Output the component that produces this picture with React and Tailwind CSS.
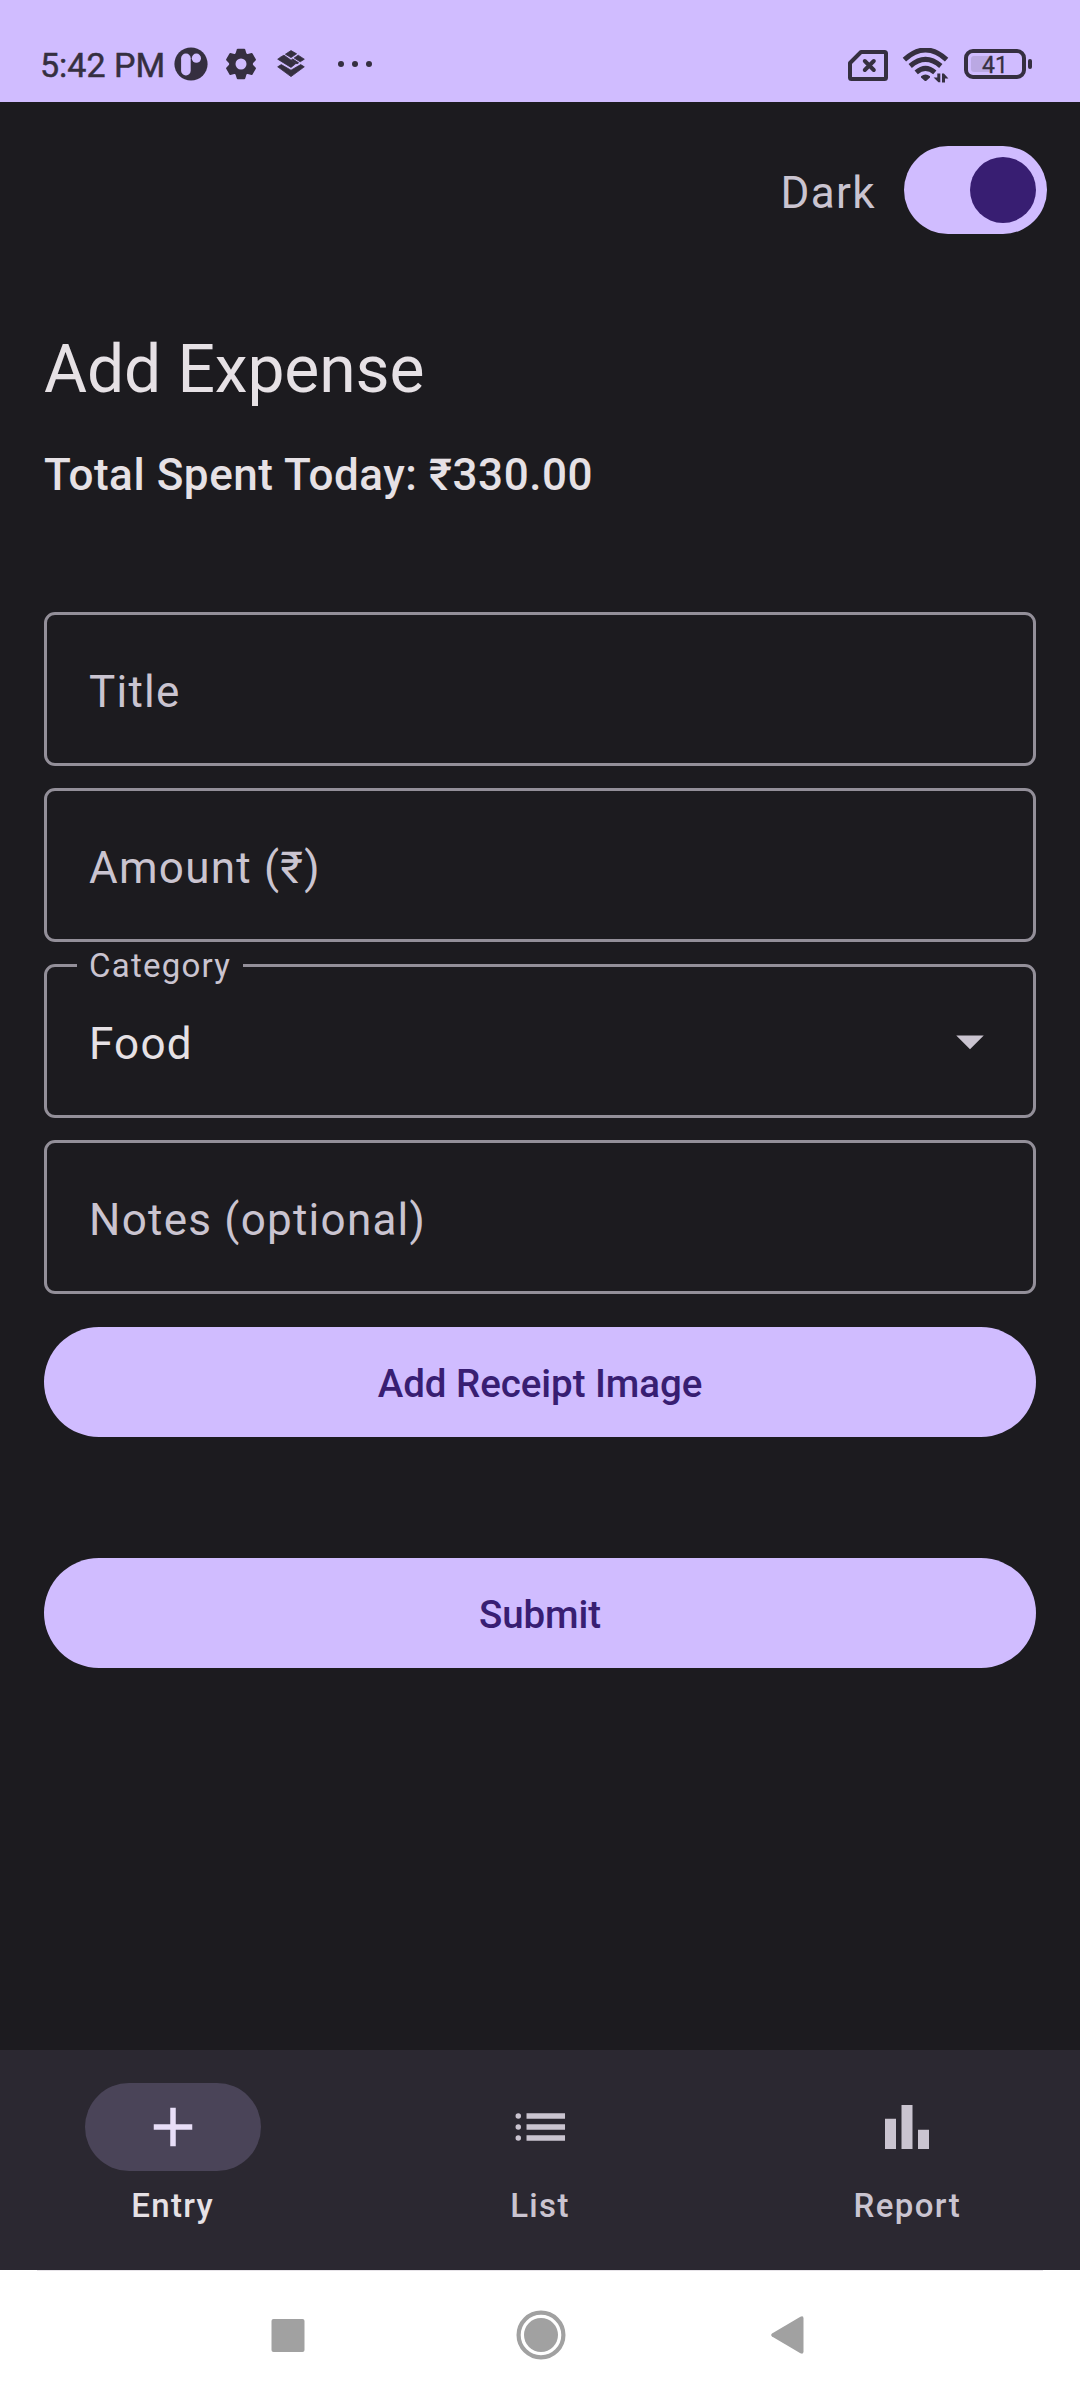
import React from "react";

const INK = "#352f40";

function PBadgeIcon() {
  return (
    <svg width="34" height="34" viewBox="0 0 34 34">
      <circle cx="17" cy="17" r="16.6" fill={INK} />
      <rect x="7.1" y="6.5" width="9.6" height="22" rx="4.7" fill="#d0bcff" />
      <circle cx="22.4" cy="11.2" r="4.6" fill="#d0bcff" />
    </svg>
  );
}

function GearIcon() {
  return (
    <svg width="32" height="32" viewBox="-16 -16 32 32" fill={INK}>
      <circle r="11.8" />
      {[0, 60, 120, 180, 240, 300].map((a) => (
        <path key={a} transform={`rotate(${a})`} d="M-5.9 -9 L-4.2 -14.6 Q-4 -15.2 -3.3 -15.2 H3.3 Q4 -15.2 4.2 -14.6 L5.9 -9 Z" />
      ))}
      <circle r="5.5" fill="#d0bcff" />
    </svg>
  );
}

function LayersIcon() {
  return (
    <svg width="28" height="28" viewBox="0 0 28 28" fill={INK} stroke={INK} strokeWidth="0.8" strokeLinejoin="round">
      <path d="M14 0.6 L19.6 3.8 L14 7.6 L8.4 4.2 Z" />
      <path d="M21.2 5.2 L27.3 9.2 L23.2 11.8 L17.2 8 Z" />
      <path d="M15.8 9 L21.6 12.8 L20 13.9 L14.3 10 Z" />
      <path d="M4.4 6.6 L7 5.2 L18.8 13.6 L14 17.4 L0.7 9.2 Z" />
      <path d="M0.7 16.8 L4.3 14.6 L14 20.2 L23.7 14.6 L27.3 16.8 L14 26.6 Z" />
    </svg>
  );
}

function SimIcon() {
  return (
    <svg width="40" height="31" viewBox="0 0 40 31" fill="none" stroke={INK} strokeWidth="4" strokeLinejoin="round">
      <path d="M13 2 H36.5 Q38 2 38 3.5 V27.5 Q38 29 36.5 29 H3.5 Q2 29 2 27.5 V13 Z" />
      <path d="M16.8 11 L25.8 20 M25.8 11 L16.8 20" strokeLinecap="round" strokeWidth="4" />
    </svg>
  );
}

function WifiIcon() {
  return (
    <svg width="48" height="36" viewBox="0 0 48 36" fill="none" stroke={INK}>
      <path d="M2.4 11.6 Q23.5 -7.6 44.6 11.6" strokeWidth="5" />
      <path d="M8.2 18 Q23.5 4.6 38.8 18" strokeWidth="5" />
      <path d="M14.2 24.4 Q23.5 16.4 32.8 24.4" strokeWidth="5" />
      <path d="M19 28.2 Q23.5 24.8 28 28.2 V29.4 L24.6 32.6 Q23.5 33.6 22.4 32.6 L19 29.4 Z" fill={INK} stroke="none" />
      <path d="M38.3 25.4 V34.2 H36.4 L31.6 29.4 H35.3 V25.4 Z" fill={INK} stroke="none" />
      <path d="M40 34.4 V25.6 H41.9 L46.4 30.4 H43 V34.4 Z" fill={INK} stroke="none" />
    </svg>
  );
}

function Battery() {
  return (
    <div className="flex items-center gap-[2px]">
      <div className="flex h-[30px] w-[62px] rounded-[9px] border-4 border-[#352f40] p-[3px]">
        <div className="h-[16px] w-[22px] rounded-[3px] bg-[#baa8e3]" />
        <span className="-ml-[11px] -mt-[2px] text-[23px] leading-[24px] text-[#352f40] [-webkit-text-stroke:0.3px_#352f40]">41</span>
      </div>
      <div className="h-[10px] w-1 rounded-[2px] bg-[#352f40]" />
    </div>
  );
}

function StatusBar() {
  return (
    <header className="flex h-[102px] items-center bg-[#d0bcff] pl-10 pr-12 pt-[26px]">
      <span className="w-[134px] whitespace-nowrap pt-px text-[34px] leading-[40px] text-[#352f40] [-webkit-text-stroke:0.5px_#352f40]">5:42 PM</span>
      <PBadgeIcon />
      <div className="ml-[17px]"><GearIcon /></div>
      <div className="ml-[20px]"><LayersIcon /></div>
      <div className="ml-[33px] flex gap-2">
        <i className="size-[6px] rounded-full bg-[#352f40]" />
        <i className="size-[6px] rounded-full bg-[#352f40]" />
        <i className="size-[6px] rounded-full bg-[#352f40]" />
      </div>
      <div className="ml-auto flex items-center">
        <div className="pt-[3px]"><SimIcon /></div>
        <div className="ml-[14px] mr-[14px] pt-[3px]"><WifiIcon /></div>
        <Battery />
      </div>
    </header>
  );
}

function Field({ label, value, floating }) {
  return (
    <div className="relative flex h-[154px] items-center rounded-[11px] border-3 border-[#938f99] pl-[42px] pr-[30px]">
      {floating && (
        <span className="absolute -top-[23px] left-[30px] w-[166px] bg-[#1c1b1f] pl-[12px] text-[33px] leading-[43px] tracking-[1.25px] text-[#cac4d0]">
          {floating}
        </span>
      )}
      <span className={value ? "pt-[6px] text-[44px] leading-[66px] tracking-[1.25px] text-[#e6e1e5]" : "pt-[6px] text-[44px] leading-[66px] tracking-[1.25px] text-[#cac4d0]"}>
        {value || label}
      </span>
      {value && (
        <svg className="ml-auto" width="66" height="66" viewBox="0 0 24 24" fill="#cac4d0">
          <path d="M7 10l5 5 5-5z" />
        </svg>
      )}
    </div>
  );
}

function PillButton({ children }) {
  return (
    <button className="flex h-[110px] w-full items-center justify-center rounded-full bg-[#d0bcff] pt-[3px] text-[38.5px] font-medium leading-[55px] tracking-[-0.06px] text-[#381e72]">
      {children}
    </button>
  );
}

function NavItem({ label, active, children }) {
  return (
    <div className="flex flex-col items-center">
      <div className={active ? "flex h-[88px] w-[176px] items-center justify-center rounded-full bg-[#4a4458]" : "flex h-[88px] w-[176px] items-center justify-center"}>
        <svg width="66" height="66" viewBox="0 0 24 24" fill={active ? "#e8def8" : "#cac4d0"}>
          {children}
        </svg>
      </div>
      <span className={active ? "mt-[13px] text-[33px] font-medium leading-[43px] tracking-[1.375px] text-[#e6e1e5]" : "mt-[13px] text-[33px] font-medium leading-[43px] tracking-[1.375px] text-[#cac4d0]"}>
        {label}
      </span>
    </div>
  );
}

export default function App() {
  return (
    <div className="flex h-[2400px] w-[1080px] flex-col overflow-hidden bg-[#1c1b1f] font-['Roboto',sans-serif]">
      <StatusBar />
      <main className="flex flex-1 flex-col px-11">
        <div className="-mr-[11px] mt-11 flex h-[88px] items-center justify-end">
          <span className="pt-[6px] text-[44px] leading-[66px] tracking-[1.375px] text-[#cac4d0]">Dark</span>
          <div className="ml-[28px] flex h-[88px] w-[143px] items-center justify-end rounded-full bg-[#d0bcff] pr-[11px]">
            <div className="size-[66px] rounded-full bg-[#381e72]" />
          </div>
        </div>
        <h1 className="mt-[91px] text-[66px] leading-[89px] tracking-[-0.12px] text-[#e6e1e5]">Add Expense</h1>
        <p className="mt-7 text-[44px] font-medium leading-[66px] tracking-[0.56px] text-[#e6e1e5]">
          Total Spent Today: ₹330.00
        </p>
        <div className="mt-[104px] flex flex-col gap-[22px]">
          <Field label="Title" />
          <Field label="Amount (₹)" />
          <Field floating="Category" value="Food" />
          <Field label="Notes (optional)" />
        </div>
        <div className="mt-[33px] flex flex-col gap-[121px]">
          <PillButton>Add Receipt Image</PillButton>
          <PillButton>Submit</PillButton>
        </div>
      </main>
      <nav className="grid h-[220px] grid-cols-3 gap-[22px] bg-[#2b2831] pt-[33px]">
        <NavItem label="Entry" active>
          <path d="M19 13h-6v6h-2v-6H5v-2h6V5h2v6h6v2z" />
        </NavItem>
        <NavItem label="List">
          <path d="M7.1 7h14v2h-14zM7.1 11h14v2h-14zM7.1 15h14v2h-14z" />
          <circle cx="4.1" cy="8" r="1" />
          <circle cx="4.1" cy="12" r="1" />
          <circle cx="4.1" cy="16" r="1" />
        </NavItem>
        <NavItem label="Report">
          <path d="M4 9h4v11H4zM16 13h4v7h-4zM10 4h4v16h-4z" />
        </NavItem>
      </nav>
      <div className="h-[130px] bg-white">
        <div className="mx-[37px] h-px bg-[#e6e3e8]" />
        <div className="flex h-[129px] items-center justify-between pb-px pl-[271px] pr-[276px]">
          <svg width="34" height="33" viewBox="0 0 34 33" fill="#a1a1a1">
            <rect x="0.5" width="33" height="33" rx="2" />
          </svg>
          <svg className="ml-[5px]" width="50" height="50" viewBox="0 0 50 50">
            <circle cx="25" cy="25" r="22.4" fill="none" stroke="#a1a1a1" strokeWidth="4.2" />
            <circle cx="25" cy="25" r="17" fill="#a1a1a1" />
          </svg>
          <svg width="33" height="38" viewBox="0 0 33 38" fill="#a1a1a1">
            <path d="M1 17.4 L29.4 0.8 Q32.5 -0.6 32.5 2.4 V35.6 Q32.5 38.6 29.4 37.2 L1 20.6 Q-0.6 19 1 17.4 Z" />
          </svg>
        </div>
      </div>
    </div>
  );
}
